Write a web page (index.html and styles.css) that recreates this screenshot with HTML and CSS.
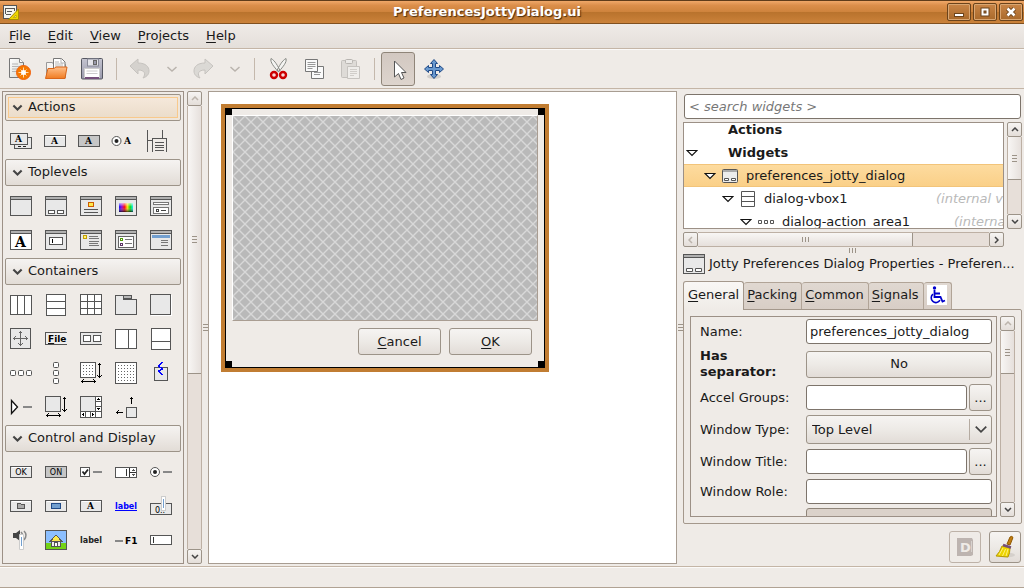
FILE: index.html
```html
<!DOCTYPE html>
<html lang="en">
<head>
<meta charset="utf-8">
<title>PreferencesJottyDialog.ui</title>
<link rel="stylesheet" href="styles.css">
</head>
<body>
<svg class="defs" aria-hidden="true">
  <defs>
    <pattern id="dots" width="3" height="3" patternUnits="userSpaceOnUse"><rect width="3" height="3" fill="#fff"/><rect x="0" y="0" width="1" height="1" fill="#666"/></pattern>
    <pattern id="hatch" width="12" height="12" patternUnits="userSpaceOnUse">
      <rect width="12" height="12" fill="#b9b9b9"/>
      <path d="M-1 -1L13 13M13 -1L-1 13" stroke="#d8d8d8" stroke-width="1.400"/>
    </pattern>
    <linearGradient id="rainbow"><stop offset="0" stop-color="#00f"/><stop offset=".2" stop-color="#90c"/><stop offset=".4" stop-color="#f00"/><stop offset=".6" stop-color="#fd0"/><stop offset=".8" stop-color="#0d0"/><stop offset="1" stop-color="#0ef"/></linearGradient>
    <linearGradient id="shade" x2="0" y2="1"><stop offset="0" stop-color="#fff" stop-opacity=".7"/><stop offset=".45" stop-color="#fff" stop-opacity="0"/><stop offset="1" stop-color="#000" stop-opacity=".75"/></linearGradient>
    <linearGradient id="paper" x2="1" y2="1"><stop offset="0" stop-color="#fff"/><stop offset="1" stop-color="#d3d7cf"/></linearGradient>
    <linearGradient id="folder" x2="0" y2="1"><stop offset="0" stop-color="#ffc08a"/><stop offset="1" stop-color="#f07c22"/></linearGradient>
    <linearGradient id="disk" x2="0" y2="1"><stop offset="0" stop-color="#c4c4d0"/><stop offset="1" stop-color="#9a9aac"/></linearGradient>
    <symbol id="win" viewBox="0 0 22 22"><rect x=".5" y="1.500" width="21" height="19" fill="#e8e8e8" stroke="#555"/><path d="M1 2h20v2H1z" fill="#b0b0b0"/><path d="M1 4.500h20" stroke="#555"/></symbol>
    <symbol id="btn" viewBox="0 0 22 22"><rect x=".5" y="5.500" width="21" height="11" rx="1" fill="#e8e8e8" stroke="#555"/><path d="M1.500 6.500h19" stroke="#fff"/></symbol>
    <symbol id="arrows" viewBox="0 0 22 22"><path d="M19.500 1v15M17.500 3.500l2-2 2 2M17.500 13.500l2 2 2-2M1 19.500h15M3.500 17.500l-2 2 2 2M13.500 17.500l2 2-2 2" fill="none" stroke="#000"/></symbol>
    <symbol id="up" viewBox="0 0 8 5"><path d="M1 4l3-3 3 3" fill="none" stroke="currentColor" stroke-width="1.500"/></symbol>
    <symbol id="down" viewBox="0 0 8 5"><path d="M1 1l3 3 3-3" fill="none" stroke="currentColor" stroke-width="1.500"/></symbol>
    <symbol id="tri" viewBox="0 0 12 8"><path d="M1 1.500h10L6 6.500z" fill="#fff" stroke="#111" stroke-width="1.200"/></symbol>
  </defs>
</svg>

<header class="titlebar">
  <svg class="app-icon" viewBox="0 0 16 15"><rect x=".5" y=".5" width="13" height="13" fill="#f4f4ee" stroke="#555"/><path d="M2 3.500h10M2.500 3v6M11.500 3v3M4 6.500h5M3 9.500h5" stroke="#555" fill="none"/><path d="M15.500 4v10.500H5.500z" fill="#edd400" stroke="#a88c00"/><path d="M13 10v2.500h-2.500z" fill="#fff6a0" stroke="#a88c00" stroke-width=".6"/></svg>
  <h1>PreferencesJottyDialog.ui</h1>
  <div class="win-buttons">
    <button aria-label="Minimize"><svg viewBox="0 0 22 16"><rect x="6.500" y="9.500" width="9" height="3" fill="#fff" stroke="#6b431b"/></svg></button>
    <button aria-label="Maximize"><svg viewBox="0 0 22 16"><rect x="8.500" y="5.500" width="5" height="5" fill="none" stroke="#6b431b" stroke-width="4"/><rect x="8.500" y="5.500" width="5" height="5" fill="none" stroke="#fff" stroke-width="2"/></svg></button>
    <button aria-label="Close"><svg viewBox="0 0 22 16"><path d="M7.500 4.500l7 7m0-7l-7 7" stroke="#6b431b" stroke-width="4.500"/><path d="M7.500 4.500l7 7m0-7l-7 7" stroke="#fff" stroke-width="2.600"/></svg></button>
  </div>
</header>

<nav class="menubar">
  <button><u>F</u>ile</button><button><u>E</u>dit</button><button><u>V</u>iew</button><button><u>P</u>rojects</button><button><u>H</u>elp</button>
</nav>

<div class="toolbar">
  <button class="tool" aria-label="New"><svg viewBox="0 0 24 24"><path d="M1.500 1.500h10l4 4v15h-14z" fill="url(#paper)" stroke="#777"/><path d="M11.500 1.500v4h4" fill="#fff" stroke="#888"/><path d="M4 7h6M4 9.500h9M4 12h9M4 14.500h7" stroke="#b5b5b5"/><circle cx="15.500" cy="15.500" r="7" fill="#f57900" stroke="#f2600c"/><path d="M15.500 10.500v10M10.500 15.500h10M12.500 12.500l6 6M18.500 12.500l-6 6" stroke="#ffd9b5"/><circle cx="15.500" cy="15.500" r="2.500" fill="#fff"/></svg></button>
  <button class="tool" aria-label="Open"><svg viewBox="0 0 24 24"><path d="M2.500 21V5.500h6l1 2h12V21z" fill="#f6f4f2" stroke="#999"/><path d="M9.500 15V1.500h8l3.500 3.500v10z" fill="#fff" stroke="#777"/><path d="M17 1.500V6h4M11 5h4M11 7h8M11 9h8" stroke="#b5b5b5" fill="none"/><path d="M4 11.500h6l2-1.500h11l-2 11.500H1.500z" fill="url(#folder)" stroke="#d9661a"/></svg></button>
  <button class="tool" aria-label="Save"><svg viewBox="0 0 24 24"><rect x="1.500" y="1.500" width="21" height="20.500" rx="1" fill="url(#disk)" stroke="#555761"/><rect x="7.500" y="2" width="11" height="7" fill="#e4e4ea" stroke="#888a98"/><rect x="13.500" y="3.500" width="3" height="4" fill="#9a9aac" stroke="#666"/><rect x="4.500" y="11.500" width="15" height="9" fill="#fff" stroke="#ccc"/><path d="M6.500 14h11M6.500 16.500h11" stroke="#ccc"/><path d="M5 20h14v2H5z" fill="#75507b"/></svg></button>
  <span class="sep"></span>
  <button class="tool" aria-label="Undo" disabled><svg viewBox="0 0 24 24"><path d="M2 9l8-7v4c8 0 11 4 11 8 0 4-3 6-6 7 3-4 2-8-5-8v4z" fill="#d5d2ce" stroke="#c6c3bf"/></svg></button>
  <button class="tool narrow" aria-label="Undo history" disabled><svg class="chev" viewBox="0 0 12 7"><path d="M1.500 1l4.500 4 4.500-4" fill="none" stroke="#b9b3ad" stroke-width="1.500"/></svg></button>
  <button class="tool" aria-label="Redo" disabled><svg viewBox="0 0 24 24"><path d="M22 9l-8-7v4C6 6 3 10 3 14c0 4 3 6 6 7-3-4-2-8 5-8v4z" fill="#dbd9d5" stroke="#c6c3bf"/></svg></button>
  <button class="tool narrow" aria-label="Redo history" disabled><svg class="chev" viewBox="0 0 12 7"><path d="M1.500 1l4.500 4 4.500-4" fill="none" stroke="#b9b3ad" stroke-width="1.500"/></svg></button>
  <span class="sep"></span>
  <button class="tool" aria-label="Cut"><svg viewBox="0 0 24 24"><path d="M5 1.500c-1 4 3 8 7 13l2-1c-2-4-5-10-9-12zM20 1.500c1 4-3 8-7 13l-2-1c2-4 5-10 9-12z" fill="#f4f4f2" stroke="#888a85"/><circle cx="8" cy="18" r="3" fill="#f6dada" stroke="#cc0000" stroke-width="2.400"/><circle cx="17" cy="18" r="3" fill="#f6dada" stroke="#cc0000" stroke-width="2.400"/></svg></button>
  <button class="tool" aria-label="Copy"><svg viewBox="0 0 24 24"><path d="M9.500 9.500h12v12h-12z" fill="#fafafa" stroke="#777"/><path d="M12 15.500h7M12 17.500h6" stroke="#999"/><path d="M3.500 2.500h12v12h-12z" fill="#fafafa" stroke="#777"/><path d="M5.500 5.500h8M5.500 7.500h8M5.500 9.500h8M5.500 11.500h5" stroke="#999"/></svg></button>
  <button class="tool" aria-label="Paste" disabled><svg viewBox="0 0 24 24"><rect x="3.500" y="3.500" width="15" height="17" rx="1" fill="#dedbd7" stroke="#c3c0bc"/><rect x="7.500" y="2.500" width="7" height="4" rx="1" fill="#eceae7" stroke="#b8b5b1"/><path d="M9.500 9.500h12v12h-12z" fill="#efedea" stroke="#c6c3bf"/><path d="M12 12.500h7M12 14.500h7M12 16.500h7M12 18.500h4" stroke="#d0cdc9"/></svg></button>
  <span class="sep"></span>
  <button class="tool active" aria-label="Select widgets" aria-pressed="true"><svg viewBox="0 0 24 24"><path d="M8.500 4v16l4-3.500 2.500 6 3-1.500-2.500-5.500H20z" fill="#fff" stroke="#555"/></svg></button>
  <button class="tool" aria-label="Drag and resize"><svg viewBox="0 0 24 24"><ellipse cx="12" cy="19.500" rx="7" ry="2.500" fill="#d2cfcb"/><path d="M12 2.500l3.500 4h-2v4h4v-2l4 3.500-4 3.500v-2h-4v4h2l-3.500 4-3.500-4h2v-4h-4v2l-4-3.500 4-3.500v2h4v-4h-2z" fill="#6a9ad0" stroke="#204a87"/></svg></button>
</div>

<main class="workspace">
  <section class="palette-pane">
    <div class="palette">
      <button class="group focus"><svg class="chev"><use href="#down"/></svg>Actions</button>
      <div class="items actions">
        <button aria-label="Action group"><svg viewBox="0 0 22 22"><path d="M4.500 7.500h17v11h-17z" fill="#e8e8e8" stroke="#555"/><path d="M8 16.500h3M13 16.500h3" stroke="#222"/><rect x=".5" y="3.500" width="17" height="11" fill="#e8e8e8" stroke="#555"/><text class="ser8" x="5" y="12">A</text></svg></button>
        <button aria-label="Action"><svg viewBox="0 0 22 22"><use href="#btn"/><text class="ser8" x="7" y="14">A</text></svg></button>
        <button aria-label="Toggle action"><svg viewBox="0 0 22 22"><rect x=".5" y="5.500" width="21" height="11" fill="#c6c6c6" stroke="#555"/><text class="ser8" x="7" y="14">A</text></svg></button>
        <button aria-label="Radio action"><svg class="smooth" viewBox="0 0 22 22"><circle cx="4.500" cy="11" r="4.500" fill="#fff" stroke="#555"/><circle cx="4.500" cy="11" r="2" fill="#222"/><text class="ser8" x="12" y="14">A</text></svg></button>
        <button aria-label="Recent action"><svg viewBox="0 0 22 22"><path d="M1.500 0v22M16.500 0v8M2 10.500h4M6.500 22V8.500h14V22M9 12.500h9M9 15.500h9M9 17.500h9M9 20.500h9" fill="none" stroke="#555"/></svg></button>
      </div>
      <button class="group"><svg class="chev"><use href="#down"/></svg>Toplevels</button>
      <div class="items">
        <button aria-label="Window"><svg viewBox="0 0 22 22"><use href="#win"/></svg></button>
        <button aria-label="Dialog box"><svg viewBox="0 0 22 22"><use href="#win"/><path d="M3.500 15.500h6v3h-6zM12.500 15.500h6v3h-6z" fill="#fff" stroke="#555"/></svg></button>
        <button aria-label="About dialog"><svg viewBox="0 0 22 22"><use href="#win"/><rect x="8.500" y="7.500" width="5" height="4" rx="1" fill="#fce94f" stroke="#ce5c00"/><path d="M4 14.500h14M4 17.500h14" stroke="#555"/></svg></button>
        <button aria-label="Color dialog"><svg viewBox="0 0 22 22"><use href="#win"/><rect x="4" y="8" width="14" height="9" fill="url(#rainbow)"/><rect x="4" y="8" width="14" height="9" fill="url(#shade)"/></svg></button>
        <button aria-label="File chooser dialog"><svg viewBox="0 0 22 22"><use href="#win"/><path d="M3.500 7.500h15v2h-15zM3.500 12.500h15v6h-15z" fill="#fff" stroke="#777"/><path d="M6.500 14.500h2v2h-2zM11 15.500h5" fill="none" stroke="#444"/></svg></button>
        <button aria-label="Font dialog"><svg viewBox="0 0 22 22"><use href="#win"/><path d="M1 5h20v15H1z" fill="#fff"/><text class="ser14" x="5" y="18">A</text></svg></button>
        <button aria-label="Input dialog"><svg viewBox="0 0 22 22"><use href="#win"/><rect x="4.500" y="8.500" width="13" height="7" fill="#fff" stroke="#555"/><path d="M7.500 10v4" stroke="#000"/></svg></button>
        <button aria-label="Message dialog"><svg viewBox="0 0 22 22"><use href="#win"/><rect x="3.500" y="6.500" width="3" height="3" fill="#fff27a" stroke="#c4a000"/><path d="M9 7.500h9M9 9.500h10M9 12.500h10M9 14.500h9M9 16.500h10" stroke="#777"/></svg></button>
        <button aria-label="Recent chooser dialog"><svg viewBox="0 0 22 22"><use href="#win"/><rect x="3.500" y="7.500" width="15" height="11" fill="#fff" stroke="#666"/><path d="M10 10.500h7M10 14.500h7" stroke="#777"/><path d="M5.500 9.500h2v2h-2z" fill="#fff" stroke="#4e9a06"/><path d="M5.500 14.500h2v2h-2z" fill="#fff" stroke="#5c3566"/></svg></button>
        <button aria-label="Assistant"><svg viewBox="0 0 22 22"><use href="#win"/><path d="M2 6h18v3H2z" fill="#729fcf"/><path d="M11 11.500h7M11 13.500h7M11 16.500h7" stroke="#777"/></svg></button>
      </div>
      <button class="group"><svg class="chev"><use href="#down"/></svg>Containers</button>
      <div class="items">
        <button aria-label="Horizontal box"><svg viewBox="0 0 22 22"><path d="M.5 1.500h21v19H.5zM7.500 2v18M14.500 2v18" fill="#fff" stroke="#555"/></svg></button>
        <button aria-label="Vertical box"><svg viewBox="0 0 22 22"><path d="M1.500.5h19v21h-19zM2 7.500h18M2 14.500h18" fill="#fff" stroke="#555"/></svg></button>
        <button aria-label="Table"><svg viewBox="0 0 22 22"><path d="M.5.5h21v20H.5zM7.500 1v19M14.500 1v19M1 7.500h20M1 14.500h20" fill="#fff" stroke="#555"/></svg></button>
        <button aria-label="Notebook"><svg viewBox="0 0 22 22"><path d="M.5 20.500v-19h8v4h13v15z" fill="#e8e8e8" stroke="#555"/><rect x="8.500" y="1.500" width="8" height="3" fill="#b8b8b8" stroke="#555"/></svg></button>
        <button aria-label="Frame"><svg viewBox="0 0 22 22"><path d="M.5.5h20v20H.5z" fill="#e8e8e8" stroke="#555"/><path d="M1 21.500h20.500V1" fill="none" stroke="#fff"/></svg></button>
        <button aria-label="Layout"><svg viewBox="0 0 22 22"><path d="M.5.5h20v20H.5z" fill="#e8e8e8" stroke="#555"/><path d="M10.500 3v15M3 10.500h15M8.500 5.500l2-2 2 2M8.500 15.500l2 2 2-2M5.500 8.500l-2 2 2 2M15.500 8.500l2 2-2 2" fill="none" stroke="#666"/></svg></button>
        <button aria-label="Menu bar"><svg viewBox="0 0 22 22"><path d="M22 4.500H.5v12H22" fill="#eee" stroke="#555"/><text class="san9" x="3" y="14"><tspan text-decoration="underline">F</tspan>ile</text></svg></button>
        <button aria-label="Toolbar"><svg viewBox="0 0 22 22"><path d="M22 4.500H.5v12H22" fill="#e8e8e8" stroke="#555"/><path d="M3.500 7.500h7v6h-7zM13.500 7.500h7v6h-7z" fill="#fff" stroke="#555"/></svg></button>
        <button aria-label="Horizontal panes"><svg viewBox="0 0 22 22"><path d="M.5 1.500h21v19H.5zM13.500 2v18" fill="#fff" stroke="#555"/></svg></button>
        <button aria-label="Vertical panes"><svg viewBox="0 0 22 22"><path d="M1.500.5h19v21h-19zM2 13.500h18" fill="#fff" stroke="#555"/></svg></button>
        <button aria-label="Horizontal button box"><svg class="smooth" viewBox="0 0 22 22"><g fill="#fff" stroke="#555"><rect x=".5" y="8.500" width="5" height="5" rx="1"/><rect x="8.500" y="8.500" width="5" height="5" rx="1"/><rect x="16.500" y="8.500" width="5" height="5" rx="1"/></g></svg></button>
        <button aria-label="Vertical button box"><svg class="smooth" viewBox="0 0 22 22"><g fill="#fff" stroke="#555"><rect x="8.500" y=".5" width="5" height="5" rx="1"/><rect x="8.500" y="8.500" width="5" height="5" rx="1"/><rect x="8.500" y="16.500" width="5" height="5" rx="1"/></g></svg></button>
        <button aria-label="Layout area"><svg viewBox="0 0 22 22"><path d="M.5.5h15v15H.5z" fill="url(#dots)" stroke="#555"/><use href="#arrows"/></svg></button>
        <button aria-label="Fixed"><svg viewBox="0 0 22 22"><path d="M.5.5h21v21H.5z" fill="url(#dots)" stroke="#555"/></svg></button>
        <button aria-label="Event box"><svg viewBox="0 0 22 22"><path d="M4.500 5.500h13v13h-13z" fill="#e8e8e8" stroke="#555"/><path d="M12.500 0l-4 4 4 3-4 2 4 4" fill="none" stroke="#00f" stroke-width="1.600"/></svg></button>
        <button aria-label="Expander"><svg class="smooth" viewBox="0 0 22 22"><path d="M1.500 4.500v13l6-6.500z" fill="#fff" stroke="#111" stroke-width="1.300"/><path d="M13 11h9" stroke="#888" stroke-width="2"/></svg></button>
        <button aria-label="Viewport"><svg viewBox="0 0 22 22"><path d="M.5.5h15v15H.5z" fill="#e8e8e8" stroke="#555"/><use href="#arrows"/></svg></button>
        <button aria-label="Scrolled window"><svg viewBox="0 0 22 22"><path d="M.5.5h21v21H.5z" fill="#e8e8e8" stroke="#555"/><path d="M16 1h5v20H1v-5h15z" fill="#fff"/><path d="M15.500 1v20M1 15.500h20M5.500 16v5M10.500 16v5M16 5.500h5M16 10.500h5" stroke="#555"/><path d="M18.500 2l2 2h-4zM18.500 14l2-2h-4zM2 18.500l2-2v4zM14 18.500l-2-2v4z" fill="#000"/></svg></button>
        <button aria-label="Alignment"><svg viewBox="0 0 22 22"><path d="M11.500 11.500h10v10h-10z" fill="#e8e8e8" stroke="#555"/><path d="M16.500 1v7M14.500 3.500l2-2 2 2M1 16.500h7M3.500 14.500l-2 2 2 2" fill="none" stroke="#000"/></svg></button>
      </div>
      <button class="group"><svg class="chev"><use href="#down"/></svg>Control and Display</button>
      <div class="items">
        <button aria-label="Button"><svg viewBox="0 0 22 22"><use href="#btn"/><text class="tiny" x="11" y="14">OK</text></svg></button>
        <button aria-label="Toggle button"><svg viewBox="0 0 22 22"><rect x=".5" y="5.500" width="21" height="11" fill="#c6c6c6" stroke="#555"/><text class="tiny" x="11" y="14">ON</text></svg></button>
        <button aria-label="Check button"><svg class="smooth" viewBox="0 0 22 22"><rect x=".5" y="6.500" width="9" height="9" fill="#fff" stroke="#555"/><path d="M2.500 10.500l2 2.500 3.500-4.500" fill="none" stroke="#222" stroke-width="1.800"/><path d="M13 11h9" stroke="#888" stroke-width="2"/></svg></button>
        <button aria-label="Spin button"><svg viewBox="0 0 22 22"><rect x=".5" y="6.500" width="21" height="10" fill="#fff" stroke="#555"/><path d="M14.500 7v9M11.500 8v7M15 11.500h6" stroke="#333"/><path d="M18 8l2 2h-4zM18 15l2-2h-4z" fill="#555"/></svg></button>
        <button aria-label="Radio button"><svg class="smooth" viewBox="0 0 22 22"><circle cx="5" cy="11" r="4.500" fill="#fff" stroke="#555"/><circle cx="5" cy="11" r="2" fill="#222"/><path d="M13 11h9" stroke="#888" stroke-width="2"/></svg></button>
        <button aria-label="File chooser button"><svg viewBox="0 0 22 22"><use href="#btn"/><path d="M7.500 13.500v-5h3l1 1h3v4z" fill="#aaa" stroke="#555"/></svg></button>
        <button aria-label="Color button"><svg viewBox="0 0 22 22"><use href="#btn"/><rect x="6.500" y="8.500" width="9" height="5" fill="#729fcf" stroke="#204a87"/></svg></button>
        <button aria-label="Font button"><svg viewBox="0 0 22 22"><use href="#btn"/><text class="ser8" x="7" y="14">A</text></svg></button>
        <button aria-label="Link button"><svg viewBox="0 0 22 22"><text class="san8 blue" x="0" y="14">label</text><path d="M0 15.500h22" stroke="#00f"/></svg></button>
        <button aria-label="Scale button"><svg viewBox="0 0 22 22"><rect x=".5" y="8.500" width="21" height="11" fill="#e8e8e8" stroke="#555"/><text class="tiny" x="10" y="18">0..</text><path d="M11.500 1.500h4v14h-4z" fill="#fff" stroke="#ccc"/><path d="M13.500 4v9" stroke="#729fcf"/></svg></button>
        <button aria-label="Volume button"><svg class="smooth" viewBox="0 0 22 22"><path d="M3 4h3l4-3v11L6 9H3z" fill="#444"/><path d="M11 3q3 3 0 7M14 2q4 4 0 9" fill="none" stroke="#888" stroke-width="1.500"/><path d="M9.500 5.500h4v15h-4z" fill="#fff" stroke="#ccc"/><path d="M11.500 8v9" stroke="#729fcf"/></svg></button>
        <button aria-label="Image"><svg viewBox="0 0 22 22"><path d="M.5 1.500h21v19H.5z" fill="#8cbfff" stroke="#555"/><path d="M1 14h20v6H1z" fill="#73d216"/><path d="M6.500 17.500v-5h9v5z" fill="#eee" stroke="#555"/><path d="M11 6l5.500 6h-11z" fill="#fce94f" stroke="#555"/><path d="M9.500 17v-4h3v4" fill="#fff" stroke="#555"/></svg></button>
        <button aria-label="Label"><svg viewBox="0 0 22 22"><text class="san8" x="0" y="14">label</text></svg></button>
        <button aria-label="Accelerator label"><svg viewBox="0 0 22 22"><path d="M0 12h8" stroke="#888" stroke-width="2"/><text class="san9" x="10" y="15">F1</text></svg></button>
        <button aria-label="Text entry"><svg viewBox="0 0 22 22"><rect x=".5" y="6.500" width="21" height="9" rx="1" fill="#fff" stroke="#555"/><path d="M3.500 8v6" stroke="#333"/></svg></button>
      </div>
    </div>
    <div class="vscroll">
      <button aria-label="Scroll up" disabled><svg><use href="#up"/></svg></button>
      <div class="trough"><span class="thumb palette-thumb"><i class="grip"></i></span></div>
      <button aria-label="Scroll down"><svg><use href="#down"/></svg></button>
    </div>
  </section>
  <div class="vhandle"><i class="grip"></i></div>

  <section class="canvas">
    <div class="design">
      <i class="knob nw"></i><i class="knob ne"></i><i class="knob sw"></i><i class="knob se"></i>
      <div class="placeholder"><svg><rect width="100%" height="100%" fill="url(#hatch)"/></svg></div>
      <div class="design-actions">
        <button class="push"><span><u>C</u>ancel</span></button>
        <button class="push"><span><u>O</u>K</span></button>
      </div>
    </div>
  </section>
  <div class="vhandle"><i class="grip"></i></div>

  <section class="inspector">
    <input class="entry search" type="text" placeholder="&lt; search widgets &gt;" aria-label="Search widgets">
    <div class="tree-area">
      <ul class="tree">
        <li class="d0"><span class="tri"></span><span class="ico"></span><b>Actions</b></li>
        <li class="d0"><svg class="tri"><use href="#tri"/></svg><span class="ico"></span><b>Widgets</b></li>
        <li class="d1 selected"><svg class="tri"><use href="#tri"/></svg><svg class="ico" viewBox="0 0 16 16"><rect x=".5" y="1.500" width="15" height="13" rx="1" fill="#ececec" stroke="#555"/><path d="M1 3h14" stroke="#aaa" stroke-width="2"/><path d="M2.500 10.500h4v2h-4zM9.500 10.500h4v2h-4z" fill="#fff" stroke="#555"/></svg><span class="name">preferences_jotty_dialog</span></li>
        <li class="d2"><svg class="tri"><use href="#tri"/></svg><svg class="ico" viewBox="0 0 16 16"><path d="M1.500.5h13v15h-13zM2 5.500h12M2 10.500h12" fill="#fff" stroke="#555"/></svg><span class="name">dialog-vbox1</span><em>(internal vbox)</em></li>
        <li class="d3"><svg class="tri"><use href="#tri"/></svg><svg class="ico" viewBox="0 0 16 16"><path d="M.5 6.500h3v3h-3zM6.500 6.500h3v3h-3zM12.500 6.500h3v3h-3z" fill="#fff" stroke="#555"/></svg><span class="name">dialog-action_area1</span><em>(internal)</em></li>
      </ul>
      <div class="vscroll">
        <button aria-label="Scroll up"><svg><use href="#up"/></svg></button>
        <div class="trough"><span class="thumb tree-thumb"><i class="grip"></i></span></div>
        <button aria-label="Scroll down"><svg><use href="#down"/></svg></button>
      </div>
      <div class="hscroll">
        <button aria-label="Scroll left" disabled><svg viewBox="0 0 5 8"><path d="M4 1L1 4l3 3" fill="none" stroke="currentColor" stroke-width="1.500"/></svg></button>
        <div class="trough"><span class="thumb"><i class="grip upright"></i></span></div>
        <button aria-label="Scroll right"><svg viewBox="0 0 5 8"><path d="M1 1l3 3-3 3" fill="none" stroke="currentColor" stroke-width="1.500"/></svg></button>
      </div>
    </div>
    <div class="hhandle"><i class="grip upright"></i></div>
    <h2 class="prop-title"><svg viewBox="0 0 22 22"><use href="#win"/><path d="M3.500 15.500h6v3h-6zM12.500 15.500h6v3h-6z" fill="#fff" stroke="#555"/></svg><span>Jotty Preferences Dialog Properties - Preferen...</span></h2>
    <div class="tabs" role="tablist">
      <button role="tab" aria-selected="true"><span><u>G</u>eneral</span></button>
      <button role="tab"><span><u>P</u>acking</span></button>
      <button role="tab"><span><u>C</u>ommon</span></button>
      <button role="tab"><span><u>S</u>ignals</span></button>
      <button role="tab" class="a11y" aria-label="Accessibility"><svg viewBox="0 0 20 20"><path d="M0 0h20v20H0z" fill="#fff"/><circle cx="7.500" cy="3" r="1.700" fill="#00c"/><path d="M7.500 5v7h6l2 4.500 2.500-1M8 8.500h5" fill="none" stroke="#00c" stroke-width="1.800"/><path d="M6 9.200a4.700 4.700 0 1 0 7 6" fill="none" stroke="#00c" stroke-width="1.600"/></svg></button>
    </div>
    <div class="page">
      <form class="props">
        <label for="name">Name:</label>
        <input id="name" class="entry" type="text" value="preferences_jotty_dialog">
        <label for="sep" class="changed">Has separator:</label>
        <button id="sep" type="button" class="push">No</button>
        <label for="accel">Accel Groups:</label>
        <div class="pair"><input id="accel" class="entry" type="text"><button type="button" class="push more" aria-label="Edit accel groups">...</button></div>
        <label for="type">Window Type:</label>
        <div class="combo"><select id="type" class="push"><option>Top Level</option></select><svg viewBox="0 0 12 7"><path d="M1.500 1L6 5.500 10.500 1" fill="none" stroke="#444" stroke-width="1.500"/></svg></div>
        <label for="title">Window Title:</label>
        <div class="pair"><input id="title" class="entry" type="text"><button type="button" class="push more" aria-label="Edit window title">...</button></div>
        <label for="role">Window Role:</label>
        <input id="role" class="entry" type="text">
        <label for="modal">Embedded:</label>
        <button id="modal" type="button" class="push pressed" aria-label="Embedded"></button>
      </form>
      <div class="vscroll">
        <button aria-label="Scroll up" disabled><svg><use href="#up"/></svg></button>
        <div class="trough"><span class="thumb tree-thumb"><i class="grip"></i></span></div>
        <button aria-label="Scroll down"><svg><use href="#down"/></svg></button>
      </div>
    </div>
    <div class="footer-buttons">
      <button class="push square" aria-label="Documentation" disabled><svg viewBox="0 0 20 20"><path d="M2 1h15l1 2v15l-2 1H2z" fill="#bdb4b0"/><path d="M16.500 4v11" stroke="#d8d2ce"/><text class="doc" x="5" y="15">D</text></svg></button>
      <button class="push square" aria-label="Reset"><svg class="broom" viewBox="0 0 24 24"><ellipse cx="13" cy="20" rx="9" ry="2.500" fill="#d5d0cb"/><path d="M14 9l3-7q2-1.500 3 .5L17 10z" fill="#c17d11" stroke="#8f5902"/><path d="M9 11l8 2q0 5-2 9l-12-1q4-4 6-10z" fill="#edd400" stroke="#b79a00"/><path d="M10 13l-4 7M12.500 14l-3 7M15 14l-2 7" stroke="#fff27a" fill="none"/><path d="M10 10l8 2.500" stroke="#75507b" stroke-width="2.500"/></svg></button>
    </div>
  </section>
</main>
<footer class="statusbar"></footer>
</body>
</html>
```
FILE: styles.css
```css
* { box-sizing: border-box; }
body {
  margin: 0;
  height: 100vh;
  display: flex;
  flex-direction: column;
  overflow: hidden;
  background: #efebe7;
  color: #1a1a1a;
  font: 13px/16px "DejaVu Sans", sans-serif;
}
button, input, select { font: inherit; color: inherit; margin: 0; padding: 0; border-radius: 0; }
button { border: 0; background: none; }
svg { display: block; }
u { text-underline-offset: 2px; }
.defs { position: absolute; width: 0; height: 0; }

.titlebar {
  flex: none;
  height: 24px;
  display: grid;
  grid-template-columns: 32px 1fr 84px;
  align-items: center;
  padding: 0 1px 0 3px;
  border-top: 1px solid #5f3c1a;
  border-bottom: 1px solid #80501f;
  background: linear-gradient(#efa869, #db8e4a 20%, #cf843d 48%, #b9732d 52%, #cb823a);
}
.titlebar h1 {
  margin: 0;
  text-align: center;
  font-size: 13px;
  line-height: 16px;
  color: #fff;
  text-shadow: 1px 1px 1px #4a2d10;
}
.app-icon { width: 16px; height: 15px; }
.win-buttons { display: flex; gap: 2px; justify-content: flex-end; }
.win-buttons button {
  width: 24px;
  height: 18px;
  border: 1px solid #6b431b;
  border-radius: 2px;
  box-shadow: inset 0 0 0 1px #d9a672;
  background: linear-gradient(#c98547, #a9692a);
}
.win-buttons svg { width: 22px; height: 16px; }

.menubar {
  flex: none;
  display: flex;
  gap: 1px;
  height: 25px;
  padding-left: 1px;
  border-bottom: 1px solid #c4b5a6;
  background: linear-gradient(#efebe7, #e4dfda);
}
.menubar button { padding: 0 8px; }

.toolbar {
  flex: none;
  display: flex;
  align-items: center;
  height: 40px;
  padding-left: 2px;
  border-top: 1px solid #fbfaf9;
  border-bottom: 1px solid #c4b5a6;
}
.tool { width: 36px; height: 34px; display: grid; place-items: center; }
.tool svg { width: 24px; height: 24px; }
.tool.narrow { width: 27px; }
.tool .chev { width: 12px; height: 7px; }
.tool.active {
  width: 34px;
  margin: 0 1px;
  border: 1px solid #8f8579;
  border-radius: 3px;
  background: linear-gradient(#d2c8c1, #ddd4cd);
}
.sep { width: 1px; height: 22px; margin: 0 5px 0 6px; background: #c4b8ac; }

.workspace {
  flex: 1;
  min-height: 0;
  display: flex;
  padding: 2px 2px 2px 2px;
}
.palette-pane { flex: none; display: flex; gap: 3px; }
.palette {
  width: 182px;
  overflow: hidden;
  padding: 2px;
  border: 1px solid #9c9086;
}
.group {
  display: flex;
  align-items: center;
  gap: 5px;
  width: 100%;
  height: 27px;
  padding: 0 0 1px 6px;
  border: 1px solid #9c9388;
  border-radius: 2px;
  background: linear-gradient(#f5f3f1, #ece8e4 50%, #e2dcd6);
}
.group .chev { width: 11px; height: 7px; color: #444; }
.group.focus {
  box-shadow: inset 0 0 0 2px #efe6db, inset 0 0 0 3px #f8c98c;
  background: linear-gradient(#f6eadd, #eadbc8);
}
.items {
  display: grid;
  grid-template-columns: repeat(5, 22px);
  grid-auto-rows: 34px;
  column-gap: 13px;
  align-items: center;
  padding: 3px 0 1px 5px;
}
.items.actions { column-gap: 12px; }
.items svg { width: 22px; height: 22px; shape-rendering: crispEdges; overflow: visible; }
.items svg.smooth { shape-rendering: auto; }
.ser8 { font: bold 9px "DejaVu Serif", serif; fill: #000; }
.ser14 { font: bold 14px "DejaVu Serif", serif; fill: #000; }
.san8 { font: bold 8px "DejaVu Sans", sans-serif; fill: #222; }
.san9 { font: bold 9px "DejaVu Sans", sans-serif; fill: #000; }
.tiny { font: 8px "DejaVu Sans", sans-serif; fill: #000; text-anchor: middle; }
.blue { fill: #00f; }
.doc { font: bold 13px "DejaVu Sans", sans-serif; fill: #efebe7; }

.vscroll, .hscroll { flex: none; display: flex; }
.vscroll { flex-direction: column; width: 15px; }
.hscroll { height: 15px; }
.vscroll > button, .hscroll > button {
  flex: none;
  width: 15px;
  height: 15px;
  display: grid;
  place-items: center;
  border: 1px solid #9c9388;
  border-radius: 2px;
  background: linear-gradient(#f6f4f2, #e4ded9);
  color: #444;
}
.vscroll > button:disabled, .hscroll > button:disabled { color: #bcb4ac; }
.vscroll > button svg { width: 8px; height: 5px; }
.hscroll > button svg { width: 5px; height: 8px; }
.trough { flex: 1; background: #e7dfd9; display: flex; }
.vscroll .trough { flex-direction: column; border: solid #bdb0a4; border-width: 0 1px; }
.hscroll .trough { border: solid #bdb0a4; border-width: 1px 0; }
.thumb { display: grid; place-items: center; background: linear-gradient(90deg, #f8f6f4, #e6e0dc); }
.vscroll .thumb { border-bottom: 1px solid #9c9388; }
.hscroll .thumb { width: 74%; border-right: 1px solid #9c9388; background: linear-gradient(#f8f6f4, #e6e0dc); }
.palette-thumb { height: 268px; }
.tree-thumb { height: 43px; }
.grip { width: 5px; height: 7px; background: repeating-linear-gradient(#9c9388 0 1px, transparent 1px 3px); }
.grip.upright { width: 7px; height: 5px; background: repeating-linear-gradient(90deg, #9c9388 0 1px, transparent 1px 3px); }
.vhandle { flex: none; width: 6px; display: grid; place-items: center; }

.canvas {
  flex: 1;
  min-width: 0;
  padding: 12px;
  overflow: hidden;
  border: 1px solid #a89d92;
  background: #fff;
}
.design {
  position: relative;
  width: max-content;
  padding: 6px;
  border: 1px solid #000;
  outline: 4px solid #c17d32;
  margin: 4px;
  background: #efebe7;
}
.knob { position: absolute; width: 7px; height: 7px; background: #000; }
.nw { left: -1px; top: -1px; }
.ne { right: -1px; top: -1px; }
.sw { left: -1px; bottom: -1px; }
.se { right: -1px; bottom: -1px; }
.placeholder { border: 1px solid; border-color: #fff #a99d92 #a99d92 #fff; }
.placeholder svg { width: 304px; height: 204px; }
.design-actions { display: flex; justify-content: flex-end; gap: 8px; padding: 7px 6px 6px; }
.design-actions .push { width: 83px; height: 27px; }

.push {
  border: 1px solid #9c9388;
  border-radius: 3px;
  background: linear-gradient(#f6f4f2, #edeae6 50%, #e2dcd7);
  text-align: center;
}
.entry {
  width: 100%;
  min-width: 0;
  height: 25px;
  padding: 0 3px 1px;
  border: 1px solid #7d746b;
  border-radius: 3px;
  background: #fff;
}

.inspector { flex: 0 0 339px; min-width: 0; display: flex; flex-direction: column; }
.search { flex: none; width: auto; margin: 3px 1px 3px; padding: 0 4px 1px; }
.search::placeholder { color: #777; font-style: italic; opacity: 1; }
.tree-area { flex: none; display: grid; grid-template-columns: minmax(0, 1fr) 15px; gap: 3px; }
.tree {
  height: 107px;
  margin: 0;
  padding: 0;
  list-style: none;
  overflow: hidden;
  border: 1px solid #9c9086;
  background: #fff;
}
.tree li { display: flex; align-items: center; height: 23px; white-space: nowrap; }
.tree li:first-child { margin-top: -5px; }
.tri { flex: none; width: 12px; height: 8px; margin-right: 6px; }
.ico { flex: none; width: 16px; height: 16px; margin-right: 8px; }
.name { flex: 0 0 172px; }
.tree em { color: #b9b9b9; }
.d0 { padding-left: 2px; }
.d1 { padding-left: 20px; }
.d2 { padding-left: 38px; }
.d3 { padding-left: 56px; }
.selected { border: solid #f2c47a; border-width: 1px 0; background: linear-gradient(#fddb9f, #fad088); }
.hhandle { flex: none; display: grid; place-items: center; height: 6px; }
.prop-title {
  flex: none;
  display: flex;
  align-items: center;
  gap: 4px;
  height: 22px;
  margin: 0 4px 6px 0;
  font-size: 13px;
  font-weight: normal;
}
.prop-title svg { flex: none; width: 22px; height: 22px; }
.prop-title span { white-space: nowrap; }

.tabs { flex: none; display: flex; align-items: flex-end; height: 28px; }
.tabs button {
  height: 27px;
  padding: 0 4px 2px 3px;
  border: 1px solid #b1a497;
  border-width: 1px 1px 0 0;
  border-radius: 3px 3px 0 0;
  background: linear-gradient(#e0d8d1, #d8cec6);
}
.tabs button[aria-selected] {
  position: relative;
  z-index: 1;
  height: 29px;
  margin-bottom: -1px;
  padding: 0 4px 2px;
  border-width: 1px 1px 0;
  border-color: #a4988c;
  background: linear-gradient(#f9f7f5, #efebe7);
}
.a11y svg { width: 20px; height: 20px; }
.page {
  flex: 1;
  min-height: 0;
  display: flex;
  gap: 3px;
  padding: 6px;
  border: 1px solid #a4988c;
  border-radius: 0 2px 2px 2px;
}
.props {
  flex: 1;
  min-width: 0;
  display: grid;
  grid-template-columns: 98px minmax(0, 1fr);
  grid-template-rows: 25px 32px 27px 29px 27px 25px 27px;
  gap: 4px 8px;
  align-items: center;
  padding: 2px 4px 0 9px;
  overflow: hidden;
  border: 1px solid #9c9086;
}
.changed { font-weight: bold; }
.props > .push { width: 100%; height: 27px; }
.pair { display: flex; align-items: center; gap: 2px; }
.more { flex: 0 0 23px; height: 27px; }
.combo { position: relative; display: grid; }
.combo select { appearance: none; height: 29px; padding: 0 30px 0 5px; text-align: left; }
.combo svg { position: absolute; right: 0; top: 4px; width: 23px; height: 21px; padding: 6px 4px; border-left: 1px solid #b5aba1; pointer-events: none; }
.props .pressed { border-color: #8f8579; background: #dbd2ca; }
.footer-buttons { flex: none; display: flex; justify-content: flex-end; gap: 8px; padding: 7px 1px 1px; }
.square { width: 32px; height: 32px; display: grid; place-items: center; }
.square:disabled { border-color: #bdb2a8; background: #efebe7; }
.square svg { width: 20px; height: 20px; }
.square .broom { width: 24px; height: 24px; }

.statusbar {
  flex: none;
  height: 22px;
  border-top: 1px solid #c4b5a6;
  border-bottom: 1px solid #b0a293;
  box-shadow: inset 0 1px #fbfaf9;
}
```
